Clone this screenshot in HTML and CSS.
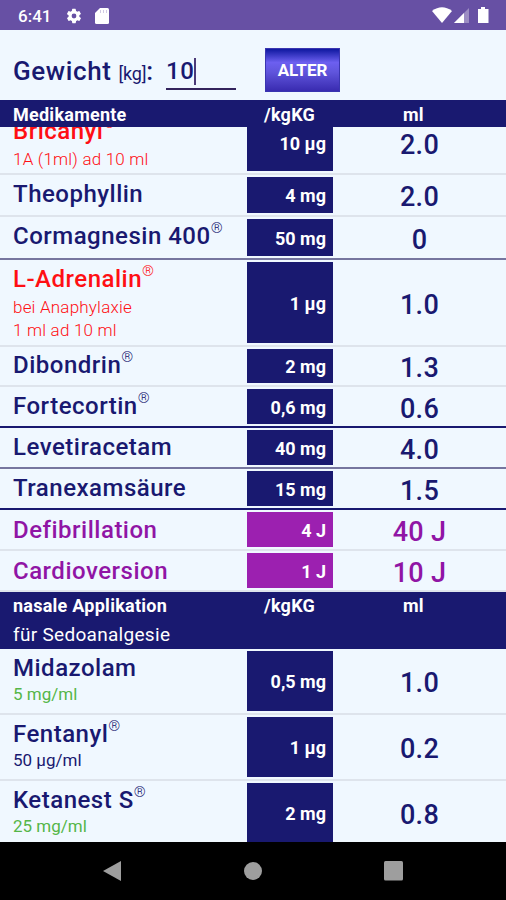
FILE: index.html
```html
<!DOCTYPE html>
<html lang="de">

<head>
    <meta charset="UTF-8">
    <meta name="viewport" content="width=device-width, initial-scale=1.0">
    <title>Medikamente</title>
    <link rel="stylesheet" href="styles.css">
</head>

<body>
    <div class="statusbar">
        <span class="clock">6:41</span>
        <svg class="gear" width="18" height="18" viewBox="0 0 24 24">
            <path fill="#fff" fill-rule="evenodd" d="M19.1 12.9a7 7 0 0 0 0-1.8l2-1.6a.5.5 0 0 0 .1-.6l-1.9-3.3a.5.5 0 0 0-.6-.2l-2.4 1a7 7 0 0 0-1.6-1l-.4-2.5a.5.5 0 0 0-.5-.4h-3.8a.5.5 0 0 0-.5.4l-.4 2.5a7 7 0 0 0-1.6 1l-2.4-1a.5.5 0 0 0-.6.2L2.7 8.9a.5.5 0 0 0 .1.6l2 1.6a7 7 0 0 0 0 1.8l-2 1.6a.5.5 0 0 0-.1.6l1.9 3.3c.1.2.4.3.6.2l2.4-1a7 7 0 0 0 1.6 1l.4 2.5c0 .2.2.4.5.4h3.8c.2 0 .5-.2.5-.4l.4-2.5a7 7 0 0 0 1.6-1l2.4 1c.2.1.5 0 .6-.2l1.9-3.3a.5.5 0 0 0-.1-.6zM12 15.2a3.2 3.2 0 1 1 0-6.4 3.2 3.2 0 0 1 0 6.4z" />
        </svg>
        <svg class="sdcard" width="14" height="16" viewBox="0 0 14 16">
            <path fill="#fff" d="M5 0h7.5Q14 0 14 1.5v13q0 1.5-1.5 1.5h-11Q0 16 0 14.5V5z" />
            <path stroke="#6750a4" stroke-opacity=".3" d="M5.5 2v3M8.5 2v3M11.5 2v3" />
        </svg>
        <svg class="signals" width="58" height="17" viewBox="0 0 58 17">
            <path fill="#fff" d="M0 4Q10-3.5 20 4L10 16z" />
            <path fill="#fff" fill-opacity=".35" d="M37 1v15H22z" />
            <path fill="#fff" d="M32 6v10H22z" />
            <path fill="#fff" d="M49 0h4v2h3.5v14h-10.500V2H49z" />
        </svg>
    </div>

    <div class="weight">
        <label for="kg">Gewicht <small>[kg]</small>:</label>
        <div class="field" id="kg">10<i class="caret"></i></div>
        <button>ALTER</button>
    </div>

    <div class="list">
        <div class="head">
            <b>Medikamente</b><b>/kgKG</b><b>ml</b>
        </div>
        <div class="rows">
            <div class="row red first">
                <div class="name">Bricanyl<sup>®</sup><p>1A (1ml) ad 10 ml</p></div>
                <div class="dose">10 µg</div>
                <div class="value">2.0</div>
            </div>
            <div class="row h42">
                <div class="name">Theophyllin</div>
                <div class="dose">4 mg</div>
                <div class="value">2.0</div>
            </div>
            <div class="row h43 grey">
                <div class="name">Cormagnesin 400<sup>®</sup></div>
                <div class="dose">50 mg</div>
                <div class="value">0</div>
            </div>
            <div class="row red h87">
                <div class="name">L-Adrenalin<sup>®</sup><p>bei Anaphylaxie</p><p>1 ml ad 10 ml</p></div>
                <div class="dose">1 µg</div>
                <div class="value">1.0</div>
            </div>
            <div class="row h40">
                <div class="name">Dibondrin<sup>®</sup></div>
                <div class="dose">2 mg</div>
                <div class="value">1.3</div>
            </div>
            <div class="row h41 navy">
                <div class="name">Fortecortin<sup>®</sup></div>
                <div class="dose">0,6 mg</div>
                <div class="value">0.6</div>
            </div>
            <div class="row h41 grey">
                <div class="name">Levetiracetam</div>
                <div class="dose">40 mg</div>
                <div class="value">4.0</div>
            </div>
            <div class="row h41 navy">
                <div class="name">Tranexamsäure</div>
                <div class="dose">15 mg</div>
                <div class="value">1.5</div>
            </div>
            <div class="row h41 purple">
                <div class="name">Defibrillation</div>
                <div class="dose">4 J</div>
                <div class="value">40 J</div>
            </div>
            <div class="row h41 purple">
                <div class="name">Cardioversion</div>
                <div class="dose">1 J</div>
                <div class="value">10 J</div>
            </div>
        </div>
        <div class="head nasal">
            <b>nasale Applikation</b><b>/kgKG</b><b>ml</b>
            <span>für Sedoanalgesie</span>
        </div>
        <div class="rows">
            <div class="row h66">
                <div class="name">Midazolam<p class="green">5 mg/ml</p></div>
                <div class="dose">0,5 mg</div>
                <div class="value">1.0</div>
            </div>
            <div class="row h66">
                <div class="name">Fentanyl<sup>®</sup><p>50 µg/ml</p></div>
                <div class="dose">1 µg</div>
                <div class="value">0.2</div>
            </div>
            <div class="row h66">
                <div class="name">Ketanest S<sup>®</sup><p class="green">25 mg/ml</p></div>
                <div class="dose">2 mg</div>
                <div class="value">0.8</div>
            </div>
        </div>
    </div>

    <div class="navbar">
        <svg width="20" height="22" viewBox="0 0 20 22"><path fill="#9e9e9e" d="M19 1v20L1 11z" /></svg>
        <svg width="18" height="18" viewBox="0 0 18 18"><circle cx="9" cy="9" r="9" fill="#9e9e9e" /></svg>
        <svg width="20" height="20" viewBox="0 0 20 20"><rect width="19" height="19.5" rx="1.5" fill="#9e9e9e" /></svg>
    </div>
</body>

</html>
```

FILE: styles.css
```css
* {
    box-sizing: border-box;
}

body {
    margin: 0;
    height: 900px;
    display: flex;
    flex-direction: column;
    overflow: hidden;
    background-color: #f0f8ff;
    color: #191970;
    font-family: Roboto, sans-serif;
}

.statusbar {
    height: 30px;
    flex: none;
    display: flex;
    align-items: center;
    padding: 1px 16px 0 18px;
    background-color: #6750a4;
    color: #fff;
}

.clock {
    width: 47px;
    font-size: 17px;
    font-weight: 500;
}

.sdcard {
    margin-left: 12px;
}

.signals {
    margin-left: auto;
}

.weight {
    height: 70px;
    flex: none;
    display: flex;
    padding-left: 13px;
    font-size: 26px;
    font-weight: 500;
}

.weight label {
    width: 153px;
    padding-top: 26px;
    letter-spacing: 0.6px;
    white-space: nowrap;
}

.weight small {
    font-size: 18px;
    font-weight: 400;
    letter-spacing: -0.2px;
}

.field {
    width: 70px;
    height: 36px;
    margin-top: 24px;
    display: flex;
    align-items: center;
    border-bottom: 2px solid #33235c;
    font-size: 24px;
    font-weight: 500;
    letter-spacing: 0.5px;
}

.caret {
    width: 2px;
    height: 27px;
    background-color: #4b3a78;
}

.weight button {
    width: 75px;
    height: 44px;
    margin: 18px 0 0 29px;
    padding: 0;
    border: 1px solid #3a35b0;
    background: linear-gradient(#0f18a0, #6c5ff0 32%, #6055dc 55%, #392bb0);
    color: #fff;
    font: bold 17px Roboto, sans-serif;
}

.list {
    height: 742px;
    overflow: hidden;
}

.rows {
    overflow: hidden;
}

.head {
    height: 27px;
    display: grid;
    grid-template-columns: 251px 139px 1fr;
    align-content: start;
    padding: 4px 0 0 13px;
    background-color: #191970;
    color: #fff;
    font-size: 18px;
    line-height: 22px;
    letter-spacing: 0.25px;
}

.nasal {
    height: 57px;
    padding-top: 3px;
    row-gap: 7px;
}

.nasal span {
    font-size: 19px;
    letter-spacing: 0.3px;
}

.row {
    display: grid;
    grid-template-columns: 247px 86px 1fr;
    border-bottom: 2px solid #dee4ec;
}

.first {
    height: 63px;
    margin-top: -15px;
}

.h40 { height: 40px; }
.h41 { height: 41px; }
.h42 { height: 42px; }
.h43 { height: 43px; }
.h66 { height: 66px; }
.h87 { height: 87px; }

.grey { border-color: #76769f; }
.navy { border-color: #191970; }

.name {
    padding: 5px 0 0 13px;
    font-size: 24px;
    font-weight: 500;
    line-height: 28px;
    letter-spacing: 0.5px;
    white-space: nowrap;
}

.h40 .name {
    padding-top: 4px;
}

.purple .name {
    padding-top: 6px;
}

.name sup {
    font-size: 15px;
    font-weight: 300;
    line-height: 0;
    vertical-align: 11px;
    letter-spacing: 0;
}

.name p {
    margin: 0;
    padding-top: 1px;
    font-size: 17px;
    font-weight: 400;
    line-height: 22px;
    letter-spacing: 0;
}

.red p {
    padding-top: 2px;
    line-height: 21px;
    font-weight: 300;
    letter-spacing: 0.2px;
}

.red p:first-of-type {
    padding-top: 4px;
}

.dose {
    margin: 2px 0;
    padding: 1px 7px 0 0;
    display: flex;
    align-items: center;
    justify-content: flex-end;
    background-color: #191970;
    color: #fff;
    font-size: 18px;
    font-weight: bold;
}

.value {
    padding-top: 4px;
    display: flex;
    align-items: center;
    justify-content: center;
    font-size: 27px;
    font-weight: 500;
    letter-spacing: 0.3px;
}

.red .name {
    color: #ff0f14;
}

.purple .name,
.purple .value {
    color: #9015a5;
}

.purple .dose {
    background-color: #9c20b0;
}

.name .green {
    color: #55b648;
}

.navbar {
    height: 58px;
    flex: none;
    display: flex;
    align-items: center;
    justify-content: center;
    gap: 122px;
    background-color: #000;
}
```
